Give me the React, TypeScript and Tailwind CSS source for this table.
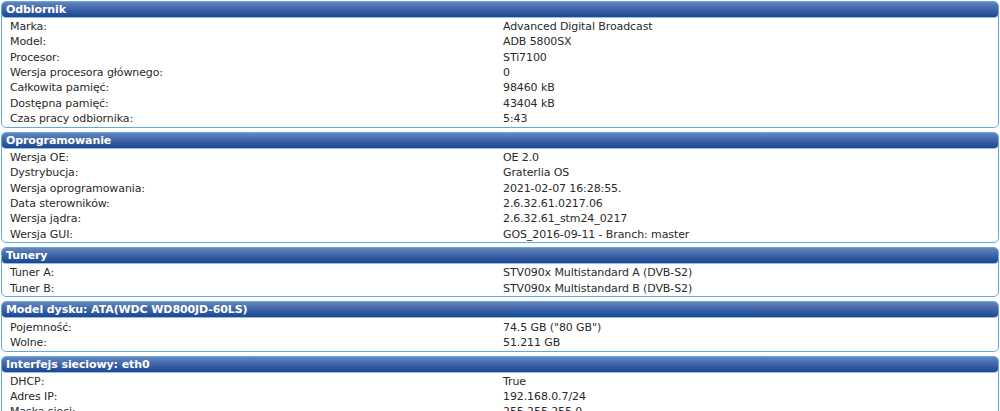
import React from "react";

type Section = { title: string; rows: [string, string][] };

const sections: Section[] = [
  {
    title: "Odbiornik",
    rows: [
      ["Marka:", "Advanced Digital Broadcast"],
      ["Model:", "ADB 5800SX"],
      ["Procesor:", "STi7100"],
      ["Wersja procesora głównego:", "0"],
      ["Całkowita pamięć:", "98460 kB"],
      ["Dostępna pamięć:", "43404 kB"],
      ["Czas pracy odbiornika:", "5:43"],
    ],
  },
  {
    title: "Oprogramowanie",
    rows: [
      ["Wersja OE:", "OE 2.0"],
      ["Dystrybucja:", "Graterlia OS"],
      ["Wersja oprogramowania:", "2021-02-07 16:28:55."],
      ["Data sterowników:", "2.6.32.61.0217.06"],
      ["Wersja jądra:", "2.6.32.61_stm24_0217"],
      ["Wersja GUI:", "GOS_2016-09-11 - Branch: master"],
    ],
  },
  {
    title: "Tunery",
    rows: [
      ["Tuner A:", "STV090x Multistandard A (DVB-S2)"],
      ["Tuner B:", "STV090x Multistandard B (DVB-S2)"],
    ],
  },
  {
    title: "Model dysku: ATA(WDC WD800JD-60LS)",
    rows: [
      ["Pojemność:", "74.5 GB (\"80 GB\")"],
      ["Wolne:", "51.211 GB"],
    ],
  },
  {
    title: "Interfejs sieciowy: eth0",
    rows: [
      ["DHCP:", "True"],
      ["Adres IP:", "192.168.0.7/24"],
      ["Maska sieci:", "255.255.255.0"],
      ["Brama:", "192.168.0.1"],
    ],
  },
];

export default function App() {
  return (
    <div
      className="w-[1000px] h-[411px] overflow-hidden bg-white pt-[1px] text-[11px] tracking-[-0.1px] text-[#2a2a2a]"
      style={{ fontFamily: '"DejaVu Sans", Verdana, sans-serif' }}
    >
      {sections.map((s) => (
        <div
          key={s.title}
          className="ml-[1px] mr-[1px] mb-[4px] border border-[#62a8e6] rounded-[5px]"
        >
          <div className="h-[16px] flex items-center pl-[4px] rounded-[4px] bg-gradient-to-b from-[#6486bf] via-[#3d64a8] to-[#1b4690] text-white font-bold leading-none border-b border-[#8fc0ee]">
            {s.title}
          </div>
          <div className="pt-[1px] pb-[0.5px]">
            {s.rows.map(([k, v]) => (
              <div key={k} className="grid grid-cols-2 h-[15.33px] items-center leading-none">
                <div className="pl-[8px] whitespace-nowrap">{k}</div>
                <div className="pl-[3px] whitespace-nowrap">{v}</div>
              </div>
            ))}
          </div>
        </div>
      ))}
    </div>
  );
}
